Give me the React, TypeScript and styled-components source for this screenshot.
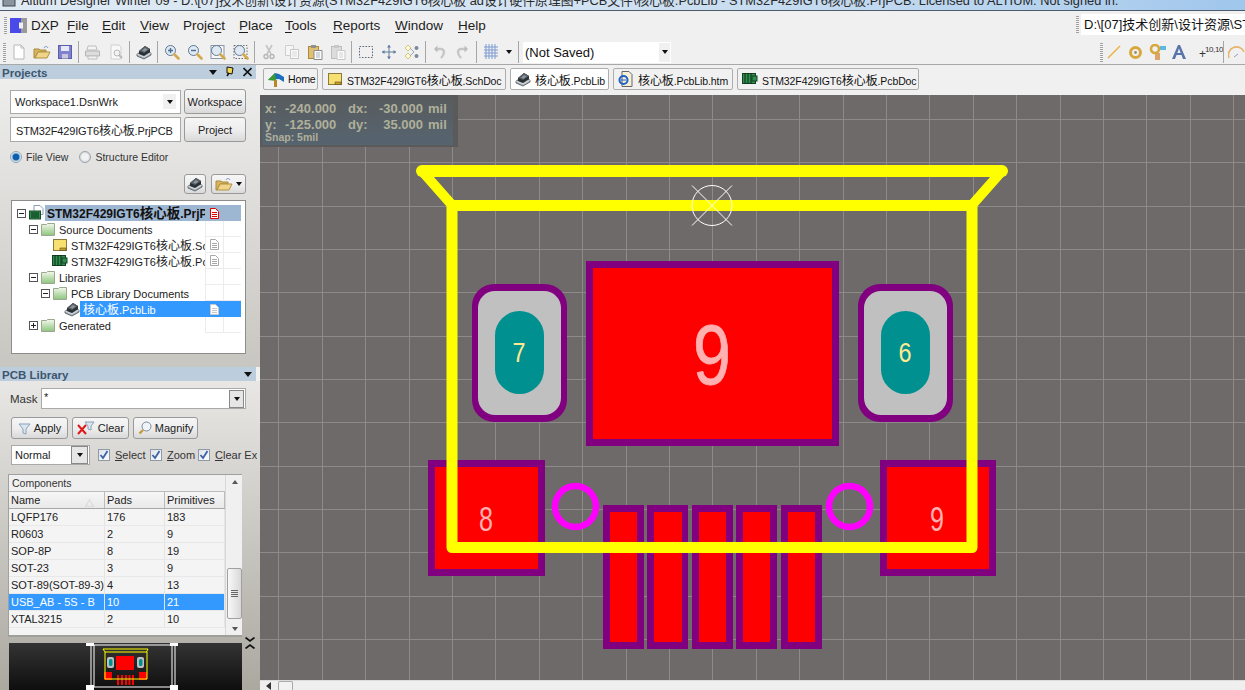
import React from "react";
import styled, { createGlobalStyle } from "styled-components";

const FONT = `"Liberation Sans","Noto Sans CJK SC",sans-serif`;

const Global = createGlobalStyle`
  html, body { margin: 0; padding: 0; background: #f0f0f0; }
  body { font-family: ${FONT}; font-size: 11px; color: #222; }
  * { box-sizing: border-box; }
`;

const Shell = styled.div`
  width: 1245px; height: 690px; overflow: hidden;
  display: flex; flex-direction: column; background: #f0f0f0;
`;

/* ---------- title, menu ---------- */
const TitleBar = styled.div`
  height: 11px; flex: none; overflow: hidden; display: flex; gap: 4px; padding-left: 2px;
  background: linear-gradient(90deg, #dfeaf4 0%, #d3e3f2 45%, #b5d2ee 85%, #9fc6ec 100%);
  border-bottom: 1px solid #4d5c6c;
`;
const TitleText = styled.div`
  margin-top: -8px; font-size: 12.8px; line-height: 17px; white-space: nowrap; color: #2a2a2a;
`;
const MenuBar = styled.div`
  height: 29px; flex: none; display: flex; align-items: center; padding: 0 0 1px 4px; background: #f0f0f0;
`;
const Grip = styled.div<{ $h: number }>`
  width: 3px; height: ${p => p.$h}px; flex: none;
  background: repeating-linear-gradient(180deg, #a0a0a0 0 1px, #f4f4f4 1px 2px);
`;
const Logo = styled.svg`
  width: 17px; height: 15px; margin-left: 3px; flex: none;
`;
const DxpItem = styled.span`
  width: 40px; flex: none; padding-left: 4px; font-size: 13.5px; color: #1c1c1c;
  u { text-underline-offset: 2px; text-decoration-thickness: 1px; }
`;
const MenuItem = styled.span<{ $w: number }>`
  width: ${p => p.$w}px; flex: none; font-size: 13.5px; color: #1c1c1c; white-space: nowrap;
  u { text-underline-offset: 2px; text-decoration-thickness: 1px; }
`;
const PathWrap = styled.div`
  margin-left: auto; display: flex; align-items: center; gap: 2px; margin-top: -2px;
`;
const PathBox = styled.div`
  width: 164px; height: 21px; background: #fff; padding-left: 3px;
  font-size: 13px; line-height: 21px; white-space: nowrap; overflow: hidden; color: #111;
`;

/* ---------- toolbar ---------- */
const ToolBar = styled.div`
  height: 25px; flex: none; display: flex; align-items: center; padding-left: 3px;
  background: #f0f0f0; border-bottom: 1px solid #a8a8a8; overflow: hidden;
`;
const ToolSpacer = styled.span`
  width: 1px; flex: none;
`;
const ToolSlot = styled.div<{ $w?: number }>`
  width: ${p => p.$w ?? 23}px; height: 22px; flex: none;
  display: flex; align-items: center; justify-content: center;
`;
const ToolSep = styled.div`
  width: 1px; height: 22px; margin: 0 2px; background: #a6a6a6; flex: none;
`;
const Combo = styled.div`
  width: 148px; height: 21px; margin-left: 2px; flex: none; background: #fff;
  display: flex; align-items: center; justify-content: space-between; padding-left: 2px;
  font-size: 13px; color: #111;
`;
const ComboArrow = styled.div`
  width: 11px; height: 19px; background: #f0f0f0; display: flex; align-items: center; justify-content: center; margin-right: 1px;
`;
const Caret = styled.div<{ $c?: string; $big?: boolean }>`
  width: 0; height: 0; flex: none;
  border-left: ${p => p.$big ? 4.5 : 3.5}px solid transparent; border-right: ${p => p.$big ? 4.5 : 3.5}px solid transparent;
  border-top: ${p => p.$big ? 5 : 4}px solid ${p => p.$c ?? "#111"};
`;
const RightTools = styled.div`
  margin-left: auto; display: flex; align-items: center; width: 145px; flex: none;
`;
const CoordLabel = styled.span`
  width: 31px; height: 18px; flex: none; display: flex; align-items: center; color: #333; font-size: 12px; padding: 4px 0 0 9px;
`;
const CoordSup = styled.span`
  font-size: 8px; letter-spacing: -0.4px; line-height: 8px; margin-top: -9px; margin-left: -1px; white-space: nowrap;
`;

/* ---------- main ---------- */
const Main = styled.div`
  flex: 1; min-height: 0; display: flex;
`;
const Sidebar = styled.div`
  width: 260px; flex: none; display: flex; flex-direction: column;
`;
const Panel = styled.div<{ $h: number; $from: string; $to: string }>`
  height: ${p => p.$h}px; flex: none; display: flex; flex-direction: column;
  background: linear-gradient(180deg, ${p => p.$from}, ${p => p.$to});
`;
const PanelHeader = styled.div`
  height: 14px; width: 256px; flex: none; background: #bccddd; display: flex; align-items: center;
  padding: 0 4px 0 2px; color: #3c5670; font-weight: bold; font-size: 11.5px; gap: 7px;
  span { flex: 1; padding-top: 1px; }
`;
const PanelHeaderWrap = styled.div`
  background: #f0f0f0; height: 14px; flex: none;
`;
const Row = styled.div<{ $pl?: number; $pt?: number; $gap?: number }>`
  display: flex; align-items: center; flex: none;
  padding-left: ${p => p.$pl ?? 10}px; margin-top: ${p => p.$pt ?? 0}px; gap: ${p => p.$gap ?? 3}px;
`;
const Field = styled.div<{ $w: number; $h: number; $pl?: number; $pr?: number; $ls?: number }>`
  width: ${p => p.$w}px; height: ${p => p.$h}px; flex: none; background: #fff; border: 1px solid #a9a9a9;
  display: flex; align-items: center; justify-content: space-between; padding: 0 ${p => p.$pr ?? 1}px 0 ${p => p.$pl ?? 4}px;
  font-size: 11px; color: #222; white-space: nowrap; overflow: hidden; letter-spacing: ${p => p.$ls ?? 0}px;
`;
const FieldArrow = styled.div<{ $w: number; $h: number; $raised?: boolean }>`
  width: ${p => p.$w}px; height: ${p => p.$h}px; flex: none; background: ${p => p.$raised ? "#e6e6e6" : "#f0f0f0"};
  border: ${p => p.$raised ? "1px solid #888" : "0"};
  display: flex; align-items: center; justify-content: center;
`;
const MaskStar = styled.span`
  margin-top: -4px;
`;
const Button = styled.div<{ $w: number; $h: number }>`
  width: ${p => p.$w}px; height: ${p => p.$h}px; flex: none; border: 1px solid #9a9a9a; border-radius: 3px;
  background: linear-gradient(180deg, #f6f6f6 0%, #ededed 55%, #d9d9d9 100%);
  display: flex; align-items: center; justify-content: center; gap: 3px;
  font-size: 11px; color: #222; white-space: nowrap; overflow: hidden;
`;
const RadioDot = styled.div<{ $on?: boolean; $ml?: number }>`
  width: 12px; height: 12px; border-radius: 50%; flex: none; border: 1px solid #98a4b0; margin-left: ${p => p.$ml ?? 0}px;
  background: ${p => p.$on ? "radial-gradient(circle, #0c5ea8 0 3px, #6da5d5 3.5px, #eef4fa 5px)" : "radial-gradient(circle, #f2f2f2 0 3px, #d8d8d8 5px)"};
`;
const RadioLabel = styled.span`
  font-size: 10.5px; color: #333; white-space: nowrap;
`;
const CheckLabel = styled.span<{ $w: number }>`
  font-size: 11px; color: #333; white-space: nowrap; overflow: hidden; margin-left: 5px; width: ${p => p.$w}px; flex: none;
  u { text-underline-offset: 1px; }
`;
const Tree = styled.div`
  width: 235px; height: 154px; margin: 6px 0 0 11px; flex: none; background: #fff; border: 1px solid #8c8c8c; padding: 4px 4px 0;
`;
const TreeRowBox = styled.div<{ $indent: number }>`
  height: 16px; display: flex; align-items: center; padding-left: ${p => p.$indent}px;
`;
const Expander = styled.div`
  width: 9px; height: 9px; flex: none; margin-right: 3px; border: 1px solid #555; background: #fff;
  position: relative;
  &::before { content: ""; position: absolute; left: 1px; right: 1px; top: 3px; height: 1px; background: #222; }
`;
const ExpanderPlus = styled(Expander)`
  &::after { content: ""; position: absolute; top: 1px; bottom: 1px; left: 3px; width: 1px; background: #222; }
`;
const TreeLabel = styled.div<{ $sel?: string; $fg?: string; $bold?: boolean }>`
  flex: 1; min-width: 0; height: 16px; display: flex; align-items: center; align-self: stretch;
  background: ${p => p.$sel ?? "transparent"}; color: ${p => p.$fg ?? "#222"};
  font-weight: ${p => p.$bold ? "bold" : "normal"}; font-size: ${p => p.$bold ? 12 : 11}px;
`;
const TreeText = styled.div<{ $bold?: boolean }>`
  flex: 1; min-width: 0; padding: 2px 0 0 ${p => p.$bold ? 2 : 3}px; white-space: nowrap; overflow: hidden; height: 16px; line-height: 14px;
  & > span { font-size: ${p => p.$bold ? 13.5 : 12}px; line-height: 12px; }
`;
const TreeCell = styled.div<{ $line?: boolean }>`
  width: 18px; height: 16px; flex: none; display: flex; align-items: center; justify-content: center;
  border-left: ${p => p.$line ? "1px solid #ececec" : "0"};
  border-bottom: ${p => p.$line ? "1px solid #ececec" : "0"};
`;
const MaskLabel = styled.span`
  font-size: 11.5px; color: #333; width: 31px; flex: none; padding-top: 1px;
`;
const Table = styled.div`
  width: 234px; height: 163px; margin: 9px 0 0 8px; flex: none; display: flex;
  background: #f4f4f4; border: 1px solid #a0a0a0; border-right: 0; border-bottom: 2px solid #a0a09a;
`;
const TableBody = styled.div`
  width: 216px; flex: none; display: flex; flex-direction: column;
`;
const TableBand = styled.div`
  height: 17px; flex: none; padding-left: 3px; font-size: 10.5px; line-height: 17px; color: #333; background: #f0f0f0; border-bottom: 1px solid #bbb;
`;
const GridRow = styled.div<{ $sel?: boolean; $head?: boolean }>`
  display: grid; grid-template-columns: 96px 60px 60px; height: 17px; flex: none; font-size: 11px;
  line-height: 16px; white-space: nowrap; overflow: hidden;
  background: ${p => p.$sel ? "#3399ff" : p.$head ? "linear-gradient(180deg,#f6f6f6,#e9e9e9)" : "#f4f4f4"};
  color: ${p => p.$sel ? "#fff" : "#222"};
  border-bottom: 1px solid ${p => p.$head ? "#a8a8a8" : "#e8e8e8"};
  & > div { padding-left: 2px; border-right: 1px solid ${p => p.$head ? "#bcbcbc" : "#e4e4e4"}; overflow: hidden; position: relative; }
`;
const SortMark = styled.i`
  position: absolute; right: 10px; top: 4px; font-style: normal; font-size: 9px; color: #bbb;
`;
const ScrollCol = styled.div`
  width: 17px; flex: none; background: #f0f0f0; display: flex; flex-direction: column; align-items: center; padding: 5px 0 4px 1px;
  border-left: 1px solid #d8d8d8;
`;
const ScrollThumb = styled.div`
  width: 15px; height: 51px; margin-top: auto; margin-bottom: 8px; border: 1px solid #a0a0a0; border-radius: 2px;
  background: linear-gradient(90deg,#f8f8f8,#d8d8d8); display: flex; flex-direction: column; align-items: center; justify-content: center; gap: 1px;
  b { width: 7px; height: 1px; background: #666; display: block; }
`;
const UpCaret = styled(Caret)`
  transform: rotate(180deg);
`;
const PreviewRow = styled.div`
  display: flex; margin: 6px 0 0 9px; gap: 3px; flex: none;
`;
const PreviewBox = styled.svg`
  width: 233px; height: 47px; display: block; flex: none;
  background: linear-gradient(180deg, #343434, #0e0e0e);
`;
const ChevBox = styled.svg`
  width: 10px; height: 12px; flex: none; margin-top: -6px;
`;

/* ---------- document area ---------- */
const DocArea = styled.div`
  flex: 1; min-width: 0; display: flex; flex-direction: column; position: relative;
`;
const TabBar = styled.div`
  height: 30px; flex: none; display: flex; align-items: flex-start; gap: 4px; padding: 3px 0 0 3px; background: #f0f0f0;
`;
const Tab = styled.div<{ $w: number; $active?: boolean }>`
  width: ${p => p.$w}px; height: 22px; flex: none; display: flex; align-items: center; gap: 4px; padding-left: 4px;
  border: 1px solid #aeaeae; border-radius: 2px; background: ${p => p.$active ? "#ffffff" : "#f1f1f1"};
  font-size: 10.5px; letter-spacing: -0.1px; color: #111; white-space: nowrap; overflow: hidden;
`;
const CanvasSvg = styled.svg`
  width: 985px; height: 585px; display: block; flex: none; background: #6e6a6a;
`;
const HScroll = styled.div`
  height: 10px; flex: none; background: #efefef; display: flex; align-items: flex-start; padding-left: 6px; gap: 7px;
  border-top: 1px solid #dcdcdc;
`;
const HThumb = styled.div`
  width: 15px; height: 9px; background: #f2f2f2; border: 1px solid #aaa; border-bottom: 0; border-radius: 2px 2px 0 0;
`;
const LeftCaret = styled.div`
  width: 0; height: 0; margin-top: 1px; border-top: 4px solid transparent; border-bottom: 4px solid transparent; border-right: 5px solid #333;
`;
const Readout = styled.div`
  position: absolute; left: 0; top: 30px; width: 198px; height: 52px; background: #5b5a5a; padding: 2px 5px 2px 2px;
`;
const ReadoutInner = styled.div`
  width: 100%; height: 100%; background: linear-gradient(180deg,#585c5e,#566470); padding: 4px 0 0 3px; color: #b0b09a; font-weight: bold;
`;
const ReadoutRow = styled.div`
  display: grid; grid-template-columns: 20px 63px 30px 45px auto; font-size: 13px; line-height: 16px; white-space: nowrap;
  span:nth-child(4) { text-align: right; }
  span:nth-child(5) { padding-left: 5px; }
`;
const SnapText = styled.div`
  font-size: 10.5px; line-height: 12px; margin-top: -2px;
`;
const CjkSpan = styled.span`
  font-size: 12px;
`;

/* ---------- icons ---------- */
const IconSvg = styled.svg`
  flex: none; display: block;
`;
const T: React.FC<{ children: string }> = ({ children }) => (
  <>{children.split(/([\u4e00-\u9fff]+)/).map((s, i) => (i % 2 ? <CjkSpan key={i}>{s}</CjkSpan> : s))}</>
);
const Ic: React.FC<{ children: React.ReactNode; w?: number; h?: number }> = ({ children, w = 16, h = 16 }) => (
  <IconSvg width={w} height={h} viewBox={`0 0 ${w} ${h}`} fill="none">{children}</IconSvg>
);
const DocIcon = () => <Ic><path d="M3 1h7l3 3v11H3z" fill="#fff" stroke="#b8b8b8" /><path d="M10 1v3h3" stroke="#b8b8b8" /></Ic>;
const OpenIcon = () => <Ic w={18}><path d="M1 5h5l1 1h6v2H5L2 14H1z" fill="#d8b460" stroke="#a88a3c" /><path d="M5 8h12l-3 6H2z" fill="#f0d48a" stroke="#b0923f" /><path d="M11 4c1-2 3-2 4 0" stroke="#6d8fc0" /></Ic>;
const SaveIcon = () => <Ic><rect x="1.5" y="1.5" width="13" height="13" fill="#7f83cf" stroke="#5a5ea8" /><rect x="4" y="2" width="8" height="5" fill="#e8e8f8" /><rect x="5" y="10" width="6" height="4.5" fill="#c8c8d8" /></Ic>;
const PrintIcon = () => <Ic w={17}><path d="M4 2h8l1 4H3z" fill="#f4f4f4" stroke="#bdbdbd" /><path d="M1.5 7h14v5h-14z" fill="#dcdcdc" stroke="#b4b4b4" /><path d="M4 12h9v3H4z" fill="#f2f2f2" stroke="#bdbdbd" /></Ic>;
const PreviewIcon = () => <Ic><path d="M3 1h8l2 2v12H3z" fill="#f8f8f8" stroke="#cfcfcf" /><circle cx="9" cy="9" r="3" fill="#f2f2f2" stroke="#b9b9b9" /><path d="M11 11l3 3" stroke="#b9b9b9" strokeWidth="2" /></Ic>;
const ChipIcon = () => (
  <Ic>
    <path d="M1 10l7-4 7 3v2l-7 4-7-3z" fill="#a8b0b8" stroke="#3a4046" strokeWidth=".7" />
    <path d="M1 10l7 3 7-4" stroke="#e4e8ec" strokeWidth=".8" />
    <path d="M3 7l6-5 5 3v3l-6 4-5-2z" fill="#2b3035" />
    <path d="M3 7l6-5 5 3-6 4z" fill="#565e66" />
    <path d="M6 6.5l3-2.5 2.5 1.5-3 2.3z" fill="#8d959d" />
  </Ic>
);
const Mag = ({ mode }: { mode: "in" | "out" | "page" | "sel" }) => (
  <Ic>
    {mode === "page" && <rect x="1" y="1.5" width="13" height="13" fill="#f6f6f6" stroke="#8a97a8" />}
    {mode === "sel" && <rect x="1" y="1.5" width="13" height="13" fill="none" stroke="#6b6b6b" strokeDasharray="1.5 1.5" />}
    <circle cx="6.5" cy="6.5" r="5" fill="#dfe9f4" stroke="#5f7891" />
    {mode === "in" && <path d="M4 6.5h5M6.5 4v5" stroke="#4a6d91" strokeWidth="1.4" />}
    {mode === "out" && <path d="M4 6.5h5" stroke="#4a6d91" strokeWidth="1.4" />}
    <path d="M10.5 10.5l4 4" stroke="#d4a94a" strokeWidth="2.6" strokeLinecap="round" />
  </Ic>
);
const CutIcon = () => <Ic w={12}><path d="M3 1l5 9M9 1l-5 9" stroke="#c4c4c4" strokeWidth="1.6" /><circle cx="3" cy="12.5" r="2" stroke="#b4b4b4" strokeWidth="1.4" /><circle cx="9" cy="12.5" r="2" stroke="#b4b4b4" strokeWidth="1.4" /></Ic>;
const CopyIcon = () => <Ic><path d="M1.5 1.5h8v10h-8z" fill="#f6f6f6" stroke="#cfcfcf" /><path d="M6.5 5.5h8v9h-8z" fill="#fafafa" stroke="#c6c6c6" /><path d="M8 8h5M8 10h5M8 12h5" stroke="#d8d8d8" /></Ic>;
const PasteIcon = ({ grey }: { grey?: boolean }) => (
  <Ic>
    <rect x="1.5" y="2.5" width="10" height="12" fill={grey ? "#dcdcdc" : "#e0c070"} stroke={grey ? "#bdbdbd" : "#a88a3c"} />
    <rect x="4" y="1" width="5" height="3" fill={grey ? "#c8c8c8" : "#909090"} />
    <path d="M7 6.5h8v9H7z" fill="#fafafa" stroke={grey ? "#c8c8c8" : "#8c8c8c"} />
    <path d="M9 9h4M9 11h4M9 13h4" stroke={grey ? "#d4d4d4" : "#aab4c0"} />
  </Ic>
);
const SelectIcon = () => <Ic><rect x="1.5" y="2.5" width="13" height="11" stroke="#5b6a7a" strokeDasharray="1.6 1.4" /></Ic>;
const MoveIcon = () => <Ic><path d="M8 1v14M1 8h14" stroke="#5f7d9c" /><path d="M8 1l-2 2.5h4zM8 15l-2-2.5h4zM1 8l2.5-2v4zM15 8l-2.5-2v4z" fill="#5f7d9c" /></Ic>;
const DistIcon = () => <Ic><path d="M1 4l3-3 3 3-3 3zM1 12l3-3 3 3-3 3z" fill="#fff8d0" stroke="#c8b868" strokeWidth=".8" /><path d="M6 4l4 4-4 4" stroke="#98a4b0" /><circle cx="12.5" cy="4" r="2" fill="#7a8a9c" /><circle cx="12.5" cy="12" r="2" fill="#7a8a9c" /></Ic>;
const UndoIcon = ({ flip }: { flip?: boolean }) => (
  <Ic w={13}>
    <g transform={flip ? "translate(13,0) scale(-1,1)" : undefined}>
      <path d="M2 5h6a3 3 0 0 1 3 3c0 2-1 4-3 6" stroke="#c6c6c6" strokeWidth="2.4" />
      <path d="M4.5 1.5L1 5l3.5 3.5z" fill="#bcbcbc" />
    </g>
  </Ic>
);
const GridIcon = () => <Ic w={14}><path d="M0 3h14M0 6h14M0 9h14M0 12h14M2 0v15M5 0v15M8 0v15M11 0v15" stroke="#7f9bd0" /></Ic>;
const LineTool = () => <Ic w={14} h={14}><path d="M1 13L13 1" stroke="#e8b84a" strokeWidth="1.6" /></Ic>;
const ViaTool = () => <Ic w={13} h={13}><circle cx="6.5" cy="6.5" r="5" stroke="#d8a83c" strokeWidth="3" /><circle cx="6.5" cy="6.5" r="1.4" fill="#a08a70" /></Ic>;
const PadTool = () => <Ic w={17}><rect x="6" y="9" width="5" height="7" fill="#dca46a" /><rect x="11" y="2" width="6" height="4" fill="#5cb8e0" /><circle cx="6" cy="5" r="4" stroke="#d8a83c" strokeWidth="2.6" /></Ic>;
const TextTool = () => <Ic w={16}><path d="M1 15L7 1h2l6 14h-3l-1.5-4h-5L4 15zM6.4 9h3.2L8 4.6z" fill="#5874a8" /></Ic>;
const ArcTool = () => <Ic w={17}><path d="M1 14A8 8 0 0 1 16 8" stroke="#e6b468" strokeWidth="1.6" /><path d="M6 13l4-3" stroke="#8da0c0" /></Ic>;
const ProjectIcon = () => (
  <Ic>
    <path d="M5 0.5h6l3 3v6H5z" fill="#fff" stroke="#8a9cb0" />
    <rect x="0.5" y="6" width="11" height="8" fill="#2f8f4f" stroke="#1a4a2a" />
    <path d="M2 8h8M2 10h8M2 12h8" stroke="#0b2c16" strokeWidth="1" />
  </Ic>
);
const PcbIcon = () => (
  <Ic>
    <rect x="0.5" y="2.5" width="13" height="10" fill="#2f8f4f" stroke="#173f25" />
    <path d="M3 2v11M6 2v11M9 2v11" stroke="#0a2a14" />
    <rect x="10" y="5" width="5" height="5" fill="#2f8f4f" stroke="#173f25" />
  </Ic>
);
const SchIcon = () => (
  <Ic>
    <rect x="1.5" y="2.5" width="13" height="11" fill="#f8e070" stroke="#8c7a3c" />
    <path d="M8 11h6v2.5H8z" fill="#c8a030" stroke="#5a4a20" strokeWidth=".6" />
  </Ic>
);
const FolderIcon = () => (
  <Ic w={15}>
    <path d="M.5 3.5h5l1-1h7v12H.5z" fill="url(#fd)" stroke="#9aa890" />
    <defs><linearGradient id="fd" x1="0" y1="0" x2="0" y2="1"><stop offset="0" stopColor="#f4f8ec" /><stop offset="1" stopColor="#8cc47c" /></linearGradient></defs>
  </Ic>
);
const SmallDoc = ({ c = "#a8a8a8" }: { c?: string }) => (
  <Ic w={9} h={11}>
    <path d="M.5.5h5l3 3v7H.5z" fill="#fff" stroke={c} />
    <path d="M2 4.5h5M2 6.5h5M2 8.5h5" stroke={c} />
  </Ic>
);
const HomeIcon = () => (
  <Ic>
    <path d="M0 9L7 2l4 1 5 3v5l-5-3z" fill="#1e6ec0" />
    <path d="M0 9L7 2l1 8z" fill="#3a9a2a" />
    <rect x="6" y="9" width="3" height="7" fill="#b8862a" />
  </Ic>
);
const HtmIcon = () => (
  <Ic>
    <path d="M4 .5h7l3 3v12H4z" fill="#f6f0d8" stroke="#666" />
    <circle cx="5.5" cy="9" r="4" stroke="#1e62c8" strokeWidth="2" />
    <path d="M3 9h5" stroke="#1e62c8" />
  </Ic>
);
const Check = styled.div`
  width: 12px; height: 12px; flex: none; background: linear-gradient(135deg,#dfe4ea,#fbfbfb); border: 1px solid #8e9aa6;
  display: flex; align-items: center; justify-content: center;
`;
const CheckFirst = styled(Check)`
  margin-left: 8px;
`;
const CheckMark = () => <Ic w={10} h={10}><path d="M1.5 5l2.5 3 4.5-7" stroke="#3b62a8" strokeWidth="1.8" /></Ic>;

/* ---------- data ---------- */
const comps = [
  ["LQFP176", "176", "183"],
  ["R0603", "2", "9"],
  ["SOP-8P", "8", "19"],
  ["SOT-23", "3", "9"],
  ["SOT-89(SOT-89-3)", "4", "13"],
  ["USB_AB - 5S - B", "10", "21"],
  ["XTAL3215", "2", "10"],
];
const gridX = Array.from({ length: 23 }, (_, i) => Math.round(278.3 + 43.4 * i));
const gridY = Array.from({ length: 14 }, (_, i) => Math.round(118.9 + 43.35 * i));
const pins = [[603, 610, 27], [647, 654, 28], [692, 699, 27], [736, 743, 27], [781, 788, 27]];

const Pad = ({ x, y, w, h, b = 7 }: { x: number; y: number; w: number; h: number; b?: number }) => (
  <>
    <rect x={x} y={y} width={w} height={h} fill="#800080" />
    <rect x={x + b} y={y + b} width={w - 2 * b} height={h - 2 * b} fill="#ff0000" />
  </>
);
const Slot = ({ x, label }: { x: number; label: string }) => (
  <>
    <rect x={x} y={284} width={95} height={138} rx={22} fill="#800080" />
    <rect x={x + 6} y={291} width={83} height={124} rx={17} fill="#c0c0c0" />
    <rect x={x + 23} y={311} width={49} height={83} rx={24.5} fill="#009090" />
    <text x={x + 47} y={362} fontSize={27} fontFamily="Liberation Sans" fill="#ffe890" textAnchor="middle" textLength={13} lengthAdjust="spacingAndGlyphs">{label}</text>
  </>
);

const TreeRow: React.FC<{
  indent: number; icon: React.ReactNode; text: string; exp?: "minus" | "plus";
  sel?: string; fg?: string; bold?: boolean; doc?: string;
}> = ({ indent, icon, text, exp, sel, fg, bold, doc }) => (
  <TreeRowBox $indent={indent}>
    {exp === "minus" && <Expander />}
    {exp === "plus" && <ExpanderPlus />}
    {icon}
    <TreeLabel $sel={sel} $fg={fg} $bold={bold}>
      <TreeText $bold={bold}><T>{text}</T></TreeText>
      <TreeCell $line={!sel}>{doc && <SmallDoc c={doc} />}</TreeCell>
      <TreeCell $line={!sel} />
    </TreeLabel>
  </TreeRowBox>
);

export default function App() {
  return (
    <Shell>
      <Global />
      <TitleBar>
        <Ic w={15} h={10}><rect x="1" y="-2" width="12" height="8" fill="#8a94a0" stroke="#40464c" /></Ic>
        <TitleText>Altium Designer Winter 09 - D:\[07]技术创新\设计资源(STM32F429IGT6核心板 ad设计硬件原理图+PCB文件\核心板.PcbLib - STM32F429IGT6核心板.PrjPCB. Licensed to ALTIUM. Not signed in.</TitleText>
      </TitleBar>
      <MenuBar>
        <Grip $h={17} />
        <Logo viewBox="0 0 17 15">
          <path d="M0 0h11v4.5h-2v6h2V15H0z" fill="#4a4ae8" />
          <path d="M11 0h6v15h-6v-4.5h2v-6h-2z" fill="#9a9a9a" />
        </Logo>
        <DxpItem>D<u>X</u>P</DxpItem>
        <MenuItem $w={35}><u>F</u>ile</MenuItem>
        <MenuItem $w={38}><u>E</u>dit</MenuItem>
        <MenuItem $w={43}><u>V</u>iew</MenuItem>
        <MenuItem $w={56}>Proje<u>c</u>t</MenuItem>
        <MenuItem $w={46}><u>P</u>lace</MenuItem>
        <MenuItem $w={48}><u>T</u>ools</MenuItem>
        <MenuItem $w={62}><u>R</u>eports</MenuItem>
        <MenuItem $w={63}><u>W</u>indow</MenuItem>
        <MenuItem $w={30}><u>H</u>elp</MenuItem>
        <PathWrap>
          <Grip $h={17} />
          <PathBox>D:\[07]技术创新\设计资源\STM32F429IGT6</PathBox>
        </PathWrap>
      </MenuBar>
      <ToolBar>
        <Grip $h={19} />
        <ToolSpacer />
        <ToolSlot><DocIcon /></ToolSlot>
        <ToolSlot><OpenIcon /></ToolSlot>
        <ToolSlot><SaveIcon /></ToolSlot>
        <ToolSep />
        <ToolSlot><PrintIcon /></ToolSlot>
        <ToolSlot><PreviewIcon /></ToolSlot>
        <ToolSep />
        <ToolSlot><ChipIcon /></ToolSlot>
        <ToolSep />
        <ToolSlot><Mag mode="in" /></ToolSlot>
        <ToolSlot><Mag mode="out" /></ToolSlot>
        <ToolSlot><Mag mode="page" /></ToolSlot>
        <ToolSlot><Mag mode="sel" /></ToolSlot>
        <ToolSep />
        <ToolSlot><CutIcon /></ToolSlot>
        <ToolSlot><CopyIcon /></ToolSlot>
        <ToolSlot><PasteIcon /></ToolSlot>
        <ToolSlot><PasteIcon grey /></ToolSlot>
        <ToolSep />
        <ToolSlot><SelectIcon /></ToolSlot>
        <ToolSlot><MoveIcon /></ToolSlot>
        <ToolSlot><DistIcon /></ToolSlot>
        <ToolSep />
        <ToolSlot><UndoIcon /></ToolSlot>
        <ToolSlot><UndoIcon flip /></ToolSlot>
        <ToolSep />
        <ToolSlot><GridIcon /></ToolSlot>
        <ToolSlot $w={14}><Caret /></ToolSlot>
        <ToolSep />
        <Combo>(Not Saved)<ComboArrow><Caret /></ComboArrow></Combo>
        <RightTools>
          <Grip $h={19} />
          <ToolSlot $w={21}><LineTool /></ToolSlot>
          <ToolSlot $w={22}><ViaTool /></ToolSlot>
          <ToolSlot $w={22}><PadTool /></ToolSlot>
          <ToolSlot $w={22}><TextTool /></ToolSlot>
          <CoordLabel>+<CoordSup>10,10</CoordSup></CoordLabel>
          <ToolSep />
          <ToolSlot $w={20}><ArcTool /></ToolSlot>
        </RightTools>
      </ToolBar>
      <Main>
        <Sidebar>
          <Panel $h={302} $from="#f0f0f0" $to="#c8c6c0">
            <PanelHeaderWrap>
              <PanelHeader>
                <span>Projects</span>
                <Caret $big />
                <Ic w={12} h={12}><path d="M3 1l6 1-1 6-5-1z" fill="#f0d850" stroke="#111" /><path d="M3 10l2-3" stroke="#111" strokeWidth="1.5" /></Ic>
                <Ic w={9} h={10}><path d="M.5 1l8 8M8.5 1l-8 8" stroke="#111" strokeWidth="1.6" /></Ic>
              </PanelHeader>
            </PanelHeaderWrap>
            <Row $pt={10}>
              <Field $w={171} $h={24} $pr={4}>Workspace1.DsnWrk<FieldArrow $w={13} $h={15}><Caret /></FieldArrow></Field>
              <Button $w={62} $h={25}>Workspace</Button>
            </Row>
            <Row $pt={3}>
              <Field $w={171} $h={25} $pl={5} $ls={-0.15}><span><T>STM32F429IGT6核心板.PrjPCB</T></span></Field>
              <Button $w={62} $h={25}>Project</Button>
            </Row>
            <Row $pt={9} $gap={4}>
              <RadioDot $on />
              <RadioLabel>File View</RadioLabel>
              <RadioDot $ml={7} />
              <RadioLabel>Structure Editor</RadioLabel>
            </Row>
            <Row $pt={11} $pl={184} $gap={5}>
              <Button $w={22} $h={20}><ChipIcon /></Button>
              <Button $w={35} $h={20}><OpenIcon /><Caret /></Button>
            </Row>
            <Tree>
              <TreeRow indent={1} exp="minus" icon={<ProjectIcon />} text="STM32F429IGT6核心板.PrjPCB" sel="#9db6d1" bold doc="#e00000" fg="#111" />
              <TreeRow indent={13} exp="minus" icon={<FolderIcon />} text="Source Documents" />
              <TreeRow indent={36} icon={<SchIcon />} text="STM32F429IGT6核心板.SchDoc" doc="#a8a8a8" />
              <TreeRow indent={36} icon={<PcbIcon />} text="STM32F429IGT6核心板.PcbDoc" doc="#a8a8a8" />
              <TreeRow indent={13} exp="minus" icon={<FolderIcon />} text="Libraries" />
              <TreeRow indent={25} exp="minus" icon={<FolderIcon />} text="PCB Library Documents" />
              <TreeRow indent={48} icon={<ChipIcon />} text="核心板.PcbLib" sel="#3399ff" fg="#fff" doc="#c8c8c8" />
              <TreeRow indent={13} exp="plus" icon={<FolderIcon />} text="Generated" />
            </Tree>
          </Panel>
          <Panel $h={323} $from="#eceae8" $to="#aaa89f">
            <PanelHeaderWrap>
              <PanelHeader><span>PCB Library</span><Caret $big /></PanelHeader>
            </PanelHeaderWrap>
            <Row $pt={7} $gap={0}>
              <MaskLabel>Mask</MaskLabel>
              <Field $w={205} $h={21} $pl={2}><MaskStar>*</MaskStar><FieldArrow $w={15} $h={18} $raised><Caret /></FieldArrow></Field>
            </Row>
            <Row $pt={8} $pl={11} $gap={4}>
              <Button $w={57} $h={22}><Ic w={13} h={13}><path d="M1 2h11L8 7v5L5 11V7z" fill="#dce6f0" stroke="#8aa0b8" /></Ic>Apply</Button>
              <Button $w={57} $h={22}>
                <Ic w={18} h={14}><path d="M1 4l8 9M9 4l-8 9" stroke="#e01818" strokeWidth="2" /><path d="M8 1h9l-3 4v4l-3-1V5z" fill="#dce6f0" stroke="#8aa0b8" /></Ic>Clear
              </Button>
              <Button $w={65} $h={22}><Ic w={14} h={14}><circle cx="8.5" cy="5.5" r="4.5" fill="#eef4fa" stroke="#7a8a9c" /><path d="M5 9l-3.5 3.5" stroke="#c89a3a" strokeWidth="2.4" /></Ic>Magnify</Button>
            </Row>
            <Row $pt={6} $pl={11} $gap={0}>
              <Field $w={79} $h={20} $pl={3}>Normal<FieldArrow $w={17} $h={18} $raised><Caret /></FieldArrow></Field>
              <CheckFirst><CheckMark /></CheckFirst>
              <CheckLabel $w={35}><u>S</u>elect</CheckLabel>
              <Check><CheckMark /></Check>
              <CheckLabel $w={31}><u>Z</u>oom</CheckLabel>
              <Check><CheckMark /></Check>
              <CheckLabel $w={42}><u>C</u>lear Existing</CheckLabel>
            </Row>
            <Table>
              <TableBody>
                <TableBand>Components</TableBand>
                <GridRow $head>
                  <div>Name<SortMark>△</SortMark></div><div>Pads</div><div>Primitives</div>
                </GridRow>
                {comps.map(c => (
                  <GridRow key={c[0]} $sel={c[0].startsWith("USB")}>
                    <div>{c[0]}</div><div>{c[1]}</div><div>{c[2]}</div>
                  </GridRow>
                ))}
              </TableBody>
              <ScrollCol>
                <UpCaret $c="#555" />
                <ScrollThumb><b /><b /><b /><b /></ScrollThumb>
                <Caret $c="#555" />
              </ScrollCol>
            </Table>
            <PreviewRow>
              <PreviewBox viewBox="9 643 233 47">
                <rect x="91" y="645" width="84" height="42" fill="none" stroke="#fff" />
                <path d="M94 645v42M172 645v42" stroke="#fff" />
                <rect x="86" y="643" width="8" height="3" fill="#fff" />
                <rect x="170" y="643" width="8" height="3" fill="#fff" />
                <rect x="86" y="685" width="8" height="5" fill="#fff" />
                <rect x="170" y="685" width="8" height="5" fill="#fff" />
                <rect x="116" y="656" width="18" height="14" fill="#f00" />
                <rect x="107" y="657" width="7" height="11" rx="2" fill="#c0c0c0" />
                <rect x="109" y="659" width="3.5" height="7" rx="1.5" fill="#009090" />
                <rect x="137" y="657" width="7" height="11" rx="2" fill="#c0c0c0" />
                <rect x="139" y="659" width="3.5" height="7" rx="1.5" fill="#009090" />
                <rect x="104" y="672" width="8" height="8" fill="#f00" />
                <rect x="139" y="672" width="8" height="8" fill="#f00" />
                {[117, 121, 125, 128.5, 132].map(x => <rect key={x} x={x} y="675" width="2" height="10" fill="#f00" />)}
                <path d="M103 649h45l-1.5 3M103 649l2 3M105 652h42v27h-42z" fill="none" stroke="#ff0" />
              </PreviewBox>
              <ChevBox viewBox="0 0 10 12">
                <path d="M.5.5L5 4l4.5-3.5M.5 11.5L5 8l4.5 3.5" stroke="#111" strokeWidth="1.7" fill="none" />
              </ChevBox>
            </PreviewRow>
          </Panel>
        </Sidebar>
        <DocArea>
          <TabBar>
            <Tab $w={55}><HomeIcon />Home</Tab>
            <Tab $w={184}><SchIcon /><span><T>STM32F429IGT6核心板.SchDoc</T></span></Tab>
            <Tab $w={99} $active><ChipIcon /><span><T>核心板.PcbLib</T></span></Tab>
            <Tab $w={120}><HtmIcon /><span><T>核心板.PcbLib.htm</T></span></Tab>
            <Tab $w={182}><PcbIcon /><span><T>STM32F429IGT6核心板.PcbDoc</T></span></Tab>
          </TabBar>
          <CanvasSvg viewBox="260 95 985 585">
            <g stroke="#8e8a8a" strokeWidth="1" shapeRendering="crispEdges">
              {gridX.map(x => <line key={x} x1={x + 0.5} x2={x + 0.5} y1={95} y2={680} />)}
              {gridY.map(y => <line key={y} y1={y + 0.5} y2={y + 0.5} x1={260} x2={1245} />)}
            </g>
            <Pad x={586} y={261} w={253} h={185} />
            <Slot x={472} label="7" />
            <Slot x={858} label="6" />
            <Pad x={428} y={460} w={117} h={116} />
            <Pad x={880} y={460} w={116} h={116} />
            {pins.map(([x, ix, w]) => (
              <React.Fragment key={x}>
                <rect x={x} y={505} width={41} height={144} fill="#800080" />
                <rect x={ix} y={512} width={w} height={130} fill="#ff0000" />
              </React.Fragment>
            ))}
            <text x={712} y={384} fontSize={86} fontFamily="Liberation Sans" fill="#ffb0b0" stroke="#ffb0b0" strokeWidth={0.8} textAnchor="middle" textLength={38} lengthAdjust="spacingAndGlyphs">9</text>
            <text x={486} y={531} fontSize={35} fontFamily="Liberation Sans" fill="#ffb0b0" textAnchor="middle" textLength={14} lengthAdjust="spacingAndGlyphs">8</text>
            <text x={937} y={531} fontSize={35} fontFamily="Liberation Sans" fill="#ffb0b0" textAnchor="middle" textLength={14} lengthAdjust="spacingAndGlyphs">9</text>
            <circle cx={575.5} cy={506.5} r={20.5} fill="none" stroke="#ff00ff" strokeWidth={6.5} />
            <circle cx={849.5} cy={506.5} r={20.5} fill="none" stroke="#ff00ff" strokeWidth={6.5} />
            <g stroke="#ffff00" fill="none" strokeLinecap="round" strokeLinejoin="round">
              <path d="M422 171H1002" strokeWidth={12} />
              <path d="M422 171L452 205M1002 171L972 205" strokeWidth={10} />
              <path d="M452 205.5H972V547.5H452Z" strokeWidth={11} />
            </g>
            <g stroke="#fff" fill="none" strokeWidth={1}>
              <circle cx={712} cy={205.5} r={20} />
              <path d="M692 185.5L732 225.5M732 185.5L692 225.5" />
            </g>
          </CanvasSvg>
          <HScroll><LeftCaret /><HThumb /></HScroll>
          <Readout>
            <ReadoutInner>
              <ReadoutRow><span>x:</span><span>-240.000</span><span>dx:</span><span>-30.000</span><span>mil</span></ReadoutRow>
              <ReadoutRow><span>y:</span><span>-125.000</span><span>dy:</span><span>35.000</span><span>mil</span></ReadoutRow>
              <SnapText>Snap: 5mil</SnapText>
            </ReadoutInner>
          </Readout>
        </DocArea>
      </Main>
    </Shell>
  );
}
